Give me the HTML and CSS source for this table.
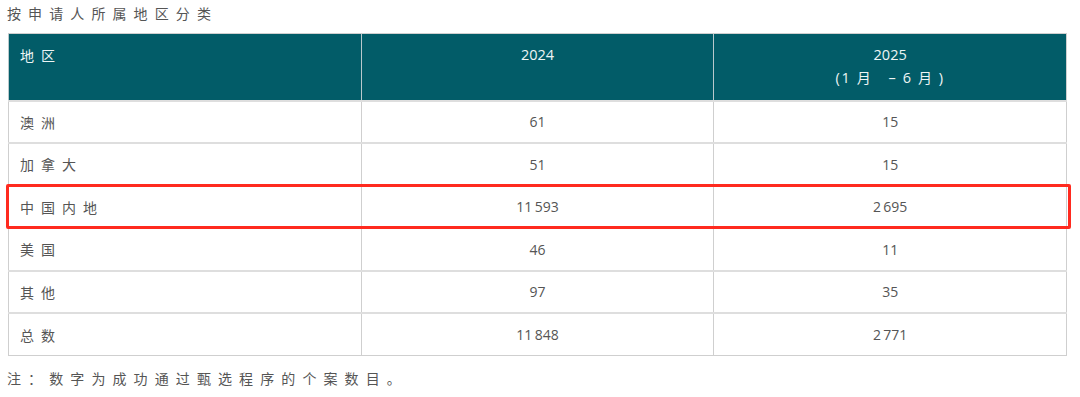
FILE: index.html
```html
<!DOCTYPE html>
<html lang="zh-CN">
<head>
<meta charset="utf-8">
<link rel="stylesheet" href="styles.css">
</head>
<body>
<div class="page">
  <div class="title">按申请人所属地区分类</div>
  <div class="table-wrap">
    <table class="data">
      <thead>
        <tr>
          <th class="label">地区</th>
          <th>2024</th>
          <th>2025<br><span class="sub">(1 <span class="cjk">月</span> &nbsp; – 6 <span class="cjk">月</span> )</span></th>
        </tr>
      </thead>
      <tbody>
        <tr><td class="label">澳洲</td><td>61</td><td>15</td></tr>
        <tr><td class="label">加拿大</td><td>51</td><td>15</td></tr>
        <tr><td class="label">中国内地</td><td>11&#8201;593</td><td>2&#8201;695</td></tr>
        <tr><td class="label">美国</td><td>46</td><td>11</td></tr>
        <tr><td class="label">其他</td><td>97</td><td>35</td></tr>
        <tr><td class="label">总数</td><td>11&#8201;848</td><td>2&#8201;771</td></tr>
      </tbody>
    </table>
    <div class="highlight"></div>
  </div>
  <div class="note">注：数字为成功通过甄选程序的个案数目。</div>
</div>
</body>
</html>
```

FILE: styles.css
```css
html, body {
  margin: 0;
  padding: 0;
  background: #ffffff;
}

.page {
  width: 1080px;
  padding: 0 13px 0 8px;
  box-sizing: border-box;
  font-family: "Open Sans", "Noto Sans CJK SC", sans-serif;
  color: #555555;
}

.title {
  font-family: "Noto Sans CJK SC", sans-serif;
  font-size: 14px;
  line-height: 20px;
  letter-spacing: 7.1px;
  padding-top: 3px;
  height: 30px;
  margin-left: -1px;
  color: #555555;
}

.table-wrap {
  position: relative;
}

.data {
  width: 1059px;
  border-collapse: collapse;
  table-layout: fixed;
  border: 1px solid #cfcfcf;
}

.data th {
  background: #025c68;
  color: #eef5f5;
  font-weight: normal;
  font-size: 14.5px;
  line-height: 22px;
  height: 67px;
  box-sizing: border-box;
  vertical-align: top;
  padding: 10px 10px 0;
  text-align: center;
  border-left: 1px solid #b9c9cc;
  border-top: 1px solid #cfcfcf;
}

.data th.label,
.data td.label {
  text-align: left;
  font-family: "Noto Sans CJK SC", sans-serif;
  font-size: 14px;
  letter-spacing: 7px;
  padding-left: 11px;
}

.data .sub {
  letter-spacing: 1.6px;
}

.data .cjk {
  font-family: "Noto Sans CJK SC", sans-serif;
  font-size: 14px;
}

.data td {
  font-size: 14px;
  height: 42.5px;
  box-sizing: border-box;
  padding: 0 10px;
  text-align: center;
  vertical-align: middle;
  border-top: 2px solid #dedede;
  border-left: 1px solid #cfcfcf;
  color: #555555;
}

.highlight {
  position: absolute;
  left: -2px;
  top: 151px;
  width: 1065px;
  height: 45px;
  box-sizing: border-box;
  border: 3px solid #ff2a1f;
  border-radius: 2px;
}

.note {
  font-family: "Noto Sans CJK SC", sans-serif;
  font-size: 14px;
  line-height: 20px;
  letter-spacing: 7.1px;
  margin-top: 12px;
  margin-left: -1px;
  color: #555555;
}
```
